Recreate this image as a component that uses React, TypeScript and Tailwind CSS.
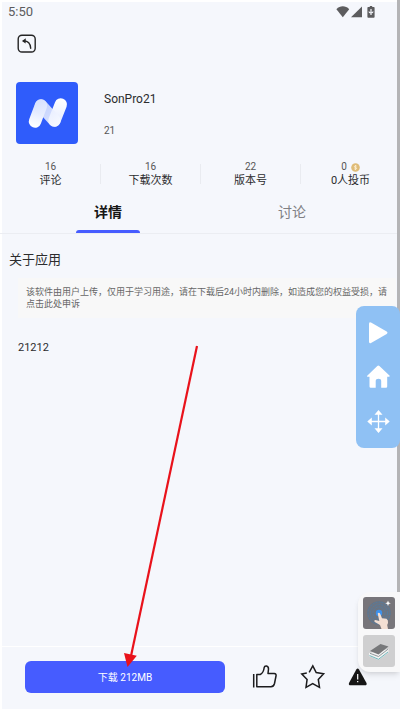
import { useState } from "react";

const stats = [
  { value: "16", label: "评论" },
  { value: "16", label: "下载次数" },
  { value: "22", label: "版本号" },
  { value: "0", label: "0人投币", coin: true },
];

const tabs = ["详情", "讨论"];

function StatusBar() {
  return (
    <div className="flex h-6 items-center justify-between pl-2 pr-6 text-[#5c5c5e]">
      <span className="text-[13px]">5:50</span>
      <svg width="40" height="12" viewBox="0 0 40 12" fill="currentColor" aria-hidden="true">
        <path d="M0.4 3.2C4 -.6 9.600-.6 13.200 3.200L6.800 11.300Z" />
        <path d="M26 0.500V11.300H15Z" />
        <path d="M33.800 0h2.400v1h1.600q.8 0 .8.800v9q0 .9-.8.900h-5.600q-.8 0-.8-.9v-9q0-.8.8-.8h1.600Z" />
        <path d="M35 3v6M33 5.500q0 1.500 2 1.500t2-1.500" fill="none" stroke="#f5f7fc" strokeWidth="1.200" />
      </svg>
    </div>
  );
}

function BackButton() {
  return (
    <button type="button" aria-label="返回" className="block">
      <svg width="20" height="20" viewBox="0 0 20 20" fill="none" stroke="#242424" strokeWidth="1.400">
        <rect x="1.200" y="1.200" width="17" height="16.800" rx="3.800" />
        <path d="M6.500 6.900C10.600 6.800 13.400 9.400 13.700 14.200" strokeLinecap="round" />
        <path d="M8.800 4.200L5 6.900L8.600 9.500Z" fill="#242424" stroke="none" />
      </svg>
    </button>
  );
}

function AppLogo() {
  return (
    <svg width="64" height="64" viewBox="0 0 64 64" fill="none" aria-hidden="true">
      <defs>
        <linearGradient id="left" gradientUnits="userSpaceOnUse" x1="26" y1="20" x2="20" y2="46">
          <stop offset="0" stopColor="#cfdaff" />
          <stop offset="1" stopColor="#ffffff" />
        </linearGradient>
        <linearGradient id="right" gradientUnits="userSpaceOnUse" x1="40" y1="44" x2="46" y2="18">
          <stop offset="0" stopColor="#e3eaff" />
          <stop offset="1" stopColor="#ffffff" />
        </linearGradient>
        <linearGradient id="diagonal" gradientUnits="userSpaceOnUse" x1="26" y1="20" x2="40" y2="44">
          <stop offset="0" stopColor="#dbe4ff" />
          <stop offset="1" stopColor="#f8faff" />
        </linearGradient>
      </defs>
      <rect x="1" y="1" width="62" height="62" rx="4" fill="#2f5cfb" />
      <g strokeWidth="12.400" strokeLinecap="round">
        <path d="M26 24.500L20 40.500" stroke="url(#left)" />
        <path d="M39.500 39.500L45.800 23.500" stroke="url(#right)" />
        <path d="M26 24.500L39.500 39.500" stroke="url(#diagonal)" strokeOpacity="0.850" />
      </g>
    </svg>
  );
}

function Coin() {
  return (
    <svg width="9" height="9" viewBox="0 0 9 9" fill="none" aria-hidden="true">
      <circle cx="4.500" cy="4.500" r="4.300" fill="#dfbc78" />
      <path d="M5.800 3.200Q4.500 2.200 3.500 3.200T4.500 4.500T5.500 5.800T3.200 5.800M4.500 2v5" stroke="#fff4dc" strokeWidth="0.700" />
    </svg>
  );
}

function FloatingControls() {
  return (
    <div className="absolute right-0 top-[306px] flex w-11 flex-col items-center gap-4 rounded-lg bg-[#8fc1f4] py-[13px]">
      <button type="button" aria-label="播放">
        <svg width="28" height="28" viewBox="0 0 28 28" fill="#fff">
          <path d="M5 4.700Q5 2.500 7 3.500L22.700 12.500Q24.500 13.800 22.700 15L7 24Q5 24.900 5 22.800Z" />
        </svg>
      </button>
      <button type="button" aria-label="主页">
        <svg width="28" height="28" viewBox="0 0 28 28" fill="#fff">
          <path d="M13.300 2.900Q14.300 1.900 15.400 2.900L25.700 12.800Q26 13.700 25 13.700H23.200V23.500Q23.200 24.700 22 24.700H17.200V18Q17.200 15.700 14.500 15.700T11.700 18V24.700H6.700Q5.500 24.700 5.500 23.500V13.700H3.600Q2.600 13.500 3.200 12.700Z" />
        </svg>
      </button>
      <button type="button" aria-label="移动">
        <svg width="28" height="28" viewBox="0 0 28 28" fill="#fff">
          <path d="M14.500 5V25M5 14.500H24" stroke="#fff" strokeWidth="1.300" />
          <path d="M14.500 3l4 4.700h-8ZM14.500 26l4-4.700h-8ZM3.300 14.500L7.800 10.600V18.400ZM25.700 14.500L21.200 10.600V18.400Z" />
        </svg>
      </button>
    </div>
  );
}

function FloatingTools() {
  return (
    <div className="absolute bottom-[39px] right-0 flex flex-col gap-1 rounded-l-xl bg-[#f8f8f9] p-1 shadow-md">
      <button type="button" aria-label="连点器">
        <svg width="34" height="34" viewBox="0 0 34 34" fill="none">
          <rect x="1" y="1" width="32" height="32" rx="3" fill="#77757a" />
          <circle cx="17" cy="17" r="12" fill="#6b7482" />
          <g stroke="#4a7fae" strokeWidth="0.700" strokeDasharray="2 1">
            <circle cx="17" cy="17" r="11" />
            <circle cx="17" cy="17" r="8.500" />
            <circle cx="17" cy="17" r="6" />
          </g>
          <circle cx="17" cy="17" r="3.200" fill="#3d91ec" />
          <path d="M15.700 17.500Q17 16 18.300 18L20 22.300L24.500 22.800Q26.500 24 26 27L25.200 29L26 33H19.500L18 29L12.800 26Q11.500 24.500 13.500 24L17.300 25Z" fill="#f3dfd3" />
          <path d="M26 4.500l.8 2 2 .8-2 .8-.8 2-.8-2-2-.8 2-.8Z" fill="#fff" />
        </svg>
      </button>
      <button type="button" aria-label="脚本">
        <svg width="34" height="34" viewBox="0 0 34 34" fill="none">
          <rect x="1" y="1" width="32" height="32" rx="3" fill="#cfcfd0" />
          <path d="M7 19V22L16.500 26L26.500 18.500V15Z" fill="#f2f2f2" />
          <path d="M7.500 21.500L16.500 25.300L26 18" stroke="#71b9bd" strokeWidth="1" />
          <path d="M8 19.300L16.500 22.500L26 15.200" stroke="#929a9c" strokeWidth="1" />
          <path d="M8 17L18.500 10L26.500 12.500L16.500 20.500Z" fill="#77787a" />
        </svg>
      </button>
    </div>
  );
}

function PointerArrow() {
  return (
    <svg
      className="pointer-events-none absolute left-[120px] top-[340px]"
      width="84"
      height="332"
      viewBox="0 0 84 332"
      aria-hidden="true"
    >
      <path d="M77 6L11 316" stroke="#e9121b" strokeWidth="2.200" />
      <path d="M7.500 327L4 313L16.800 315.700Z" fill="#e9121b" />
    </svg>
  );
}

function BottomBar() {
  return (
    <footer className="flex items-center border-t border-white pb-[18px] pl-[25px] pt-[14px]">
      <button
        type="button"
        className="h-8 w-[200px] rounded-md bg-[#465cff] text-[10px] text-white"
      >
        下载 212MB
      </button>
      <div className="ml-[27px] flex items-center gap-[22px]">
        <button type="button" aria-label="点赞">
          <svg width="26" height="26" viewBox="0 0 26 26" fill="none" stroke="#1c1c1e" strokeWidth="1.500" strokeLinejoin="round">
            <path d="M1.700 10V23.500M4.800 10.500H8.200Q11.500 9 12.200 3.500Q12.500 1.800 14.500 2Q16.500 2.400 16.500 5L16 9.500H22.200Q24.500 9.800 24 12L22.500 19.500Q21.600 22.800 19 22.800H4.800Z" />
          </svg>
        </button>
        <button type="button" aria-label="收藏">
          <svg width="26" height="26" viewBox="0 0 26 26" fill="none" stroke="#1c1c1e" strokeWidth="1.500">
            <path d="M9.200 8.300L12.800 1.800L16.200 8.600L23.600 9.800L18.300 15.400L19.500 23.300L12.700 19.700L6 23.300L7.100 15.400L1.800 9.900L6.800 9.100" />
          </svg>
        </button>
        <button type="button" aria-label="举报">
          <svg width="20" height="20" viewBox="0 0 20 20">
            <path d="M8.300 2.400Q9.700.6 11 2.400L18.500 16Q19.200 18.300 17 18.300H2.500Q.3 18.300 1 16Z" fill="#161616" />
            <path d="M9.700 7V12.500M9.700 14V15.300" stroke="#fff" strokeWidth="1.200" />
          </svg>
        </button>
      </div>
    </footer>
  );
}

export default function App() {
  const [activeTab, setActiveTab] = useState("详情");

  return (
    <div className="relative flex min-h-screen flex-col overflow-hidden bg-[#f5f7fc] font-[Roboto,'Noto_Sans_CJK_SC',sans-serif] text-[#2c2c2e] shadow-[inset_2px_2px_0_#fff,inset_0_-2px_0_#fff]">
      <div className="absolute right-0 top-0 h-[605px] w-[3px] bg-[#b4b4b6]" />

      <StatusBar />

      <header className="px-[17px] pt-[10px]">
        <BackButton />
      </header>

      <section className="mt-[27px] flex gap-[25px] px-[15px]">
        <AppLogo />
        <div className="flex flex-col gap-[14px] pt-2">
          <h1 className="text-xs leading-5">SonPro21</h1>
          <p className="text-[10px] leading-4 text-[#555]">21</p>
        </div>
      </section>

      <ul className="mt-[15px] grid grid-cols-4 text-center text-[11px] leading-[14px]">
        {stats.map((s, i) => (
          <li key={s.label} className="flex items-center">
            <span className={`h-5 w-px ${i > 0 ? "bg-[#e9ebf0]" : ""}`} />
            <div className="flex-1">
              <div className="flex items-center justify-center gap-1 text-[10px] text-[#555]">
                {s.value}
                {s.coin && <Coin />}
              </div>
              <div>{s.label}</div>
            </div>
          </li>
        ))}
      </ul>

      <nav className="mt-[10px] flex border-b border-[#ebedf2] px-4">
        {tabs.map((t) => (
          <button
            key={t}
            type="button"
            onClick={() => setActiveTab(t)}
            className={`flex flex-1 flex-col items-center gap-2 pt-1 text-sm ${
              t === activeTab ? "font-bold text-[#161616]" : "text-[#808084]"
            }`}
          >
            {t}
            <span className={`h-[3px] w-16 rounded-t-sm ${t === activeTab ? "bg-[#465cff]" : ""}`} />
          </button>
        ))}
      </nav>

      <main className="flex-1">
        <h2 className="mt-4 px-[9px] text-[13px] leading-5">关于应用</h2>
        <p className="ml-[18px] mr-1 mt-2 bg-[#f8f8f8] py-2 pl-2 pr-1 text-[9px] leading-3 text-[#666]">
          该软件由用户上传，仅用于学习用途，请在下载后24小时内删除，如造成您的权益受损，请点击此处申诉
        </p>
        <p className="mt-5 px-[18px] text-[11px] leading-5">21212</p>
      </main>

      <BottomBar />

      <FloatingControls />
      <FloatingTools />
      <PointerArrow />
    </div>
  );
}
